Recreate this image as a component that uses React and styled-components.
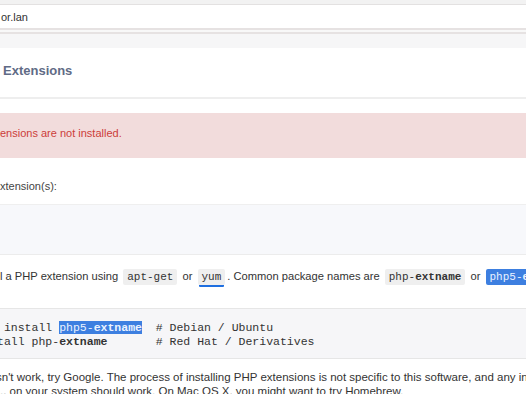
import React from 'react';
import styled, { createGlobalStyle } from 'styled-components';

const GlobalStyle = createGlobalStyle`
  html, body {
    margin: 0;
    padding: 0;
    background: #fff;
  }
`;

const Page = styled.div`
  width: 526px;
  height: 394px;
  overflow: hidden;
  background: #fff;
  font-family: "Liberation Sans", Arial, sans-serif;
  font-size: 11px;
  color: #333;
`;

const TopEdge = styled.div`
  height: 4px;
  background: #f2f2f2;
  border-bottom: 1px solid #e3e1e1;
`;

const HostField = styled.div`
  height: 23px;
  display: flex;
  align-items: center;
  padding-left: 1px;
  color: #333;
`;

const DoubleRule = styled.div`
  height: 2px;
  background: #f8f8f8;
  border-top: 2px solid #e6e2e2;
  border-bottom: 2px solid #e6e2e2;
`;

const SubBar = styled.div`
  height: 14px;
  background: #f6f6f7;
`;

const Header = styled.div`
  box-sizing: border-box;
  height: 51px;
  display: flex;
  align-items: center;
  padding: 0 0 4px 3px;
  border-bottom: 2px solid #eeeeee;
`;

const Title = styled.h2`
  margin: 0;
  font-size: 13px;
  font-weight: bold;
  color: #5f6b86;
`;

const Spacer = styled.div`
  height: ${(p) => p.h}px;
`;

const Alert = styled.div`
  box-sizing: border-box;
  height: 45px;
  display: flex;
  align-items: center;
  padding-bottom: 5px;
  background: #f2dcdc;
  color: #cc3d3a;
  white-space: nowrap;
`;

const Prompt = styled.div`
  box-sizing: border-box;
  height: 46px;
  padding-top: 21px;
  line-height: 14px;
  color: #444;
  white-space: nowrap;
`;

const Band = styled.div`
  height: 49px;
  background: #f7f8fb;
  border-top: 1px solid #efefef;
  border-bottom: 1px solid #ececec;
`;

const Para = styled.p`
  margin: 0;
  padding: ${(p) => p.pad};
  font-size: ${(p) => p.size}px;
  line-height: ${(p) => p.lh}px;
  text-indent: ${(p) => p.indent || 0}px;
  white-space: nowrap;
  color: #333;
`;

const Code = styled.code`
  font-family: "Liberation Mono", "Courier New", monospace;
  font-size: 11px;
  line-height: 12px;
  padding: 2px 4px;
  margin: 0 2px;
  background: ${(p) => (p.selected ? '#3d7fe0' : '#efefef')};
  color: ${(p) => (p.selected ? '#eaf2ff' : '#333')};
  border-radius: 2px;
  box-shadow: ${(p) => (p.focused ? '0 3px 0 -1px #1f6fe0' : 'none')};

  b {
    font-weight: bold;
  }
`;

const Block = styled.pre`
  margin: 0 0 0 -3px;
  padding: 12px 0 9px;
  background: #f6f6f8;
  border-top: 1px solid #e6e6e6;
  border-bottom: 1px solid #e6e6e6;
  font-family: "Liberation Mono", "Courier New", monospace;
  font-size: 11.5px;
  line-height: 14px;
  color: #333;
  overflow: hidden;

  b {
    font-weight: bold;
  }
`;

const Selected = styled.span`
  background: #3d7fe0;
  color: #eaf2ff;
`;

export default function App() {
  return (
    <Page>
      <GlobalStyle />
      <TopEdge />
      <HostField>or.lan</HostField>
      <DoubleRule />
      <SubBar />
      <Header>
        <Title>Extensions</Title>
      </Header>
      <Spacer h={14} />
      <Alert>ensions are not installed.</Alert>
      <Prompt>xtension(s):</Prompt>
      <Band />
      <Para pad="10px 0 21px" size={11.15} lh={22}>
        l a PHP extension using <Code>apt-get</Code> or <Code focused>yum</Code>. Common package
        names are <Code>php-<b>extname</b></Code> or <Code selected>php5-<b>extname</b></Code>
      </Para>
      <Block>
        {' install '}
        <Selected>
          php5-<b>extname</b>
        </Selected>
        {'  # Debian / Ubuntu\n'}
        tall php-<b>extname</b>
        {'       # Red Hat / Derivatives'}
      </Block>
      <Para pad="11px 0 0" size={11.5} lh={14} indent={-4}>
        sn't work, try Google. The process of installing PHP extensions is not specific to this
        software, and any installation guide
        <br />
        ., on your system should work. On Mac OS X, you might want to try Homebrew.
      </Para>
    </Page>
  );
}
